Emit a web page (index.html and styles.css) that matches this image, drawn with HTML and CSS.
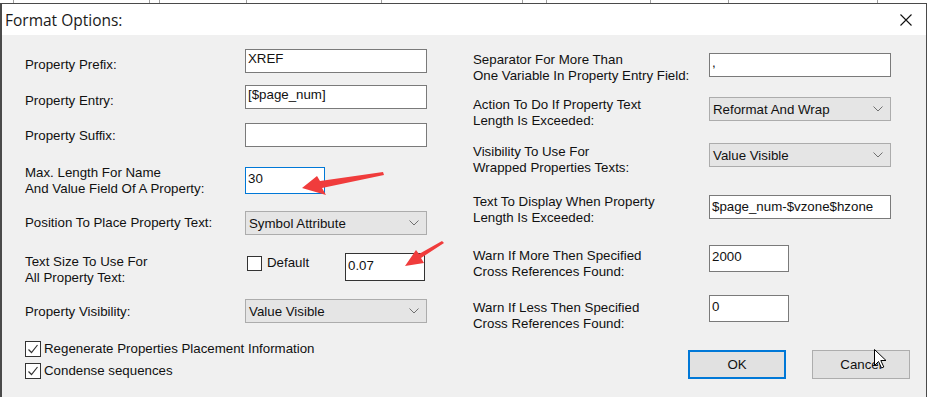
FILE: index.html
```html
<!DOCTYPE html>
<html lang="en">
<head>
  <meta charset="UTF-8">
  <meta name="viewport" content="width=device-width, initial-scale=1.0">
  <title>Format Options</title>
  <link rel="stylesheet" href="styles.css">
</head>
<body>
  <!-- table of the app behind the dialog -->
  <div class="backdrop">
    <span style="width:13px"></span>
    <span style="width:135px"></span>
    <span style="width:9px"></span>
    <span style="width:86px"></span>
    <span style="width:134px"></span>
    <span style="width:140px"></span>
    <span style="width:23px"></span>
    <span style="width:103px"></span>
    <span style="width:77px"></span>
    <span style="width:148px"></span>
  </div>

  <div class="dialog">
    <div class="titlebar">
      <span class="title">Format Options:</span>
      <svg class="close" width="12" height="12" viewBox="0 0 12 12">
        <path d="M0.5 0.5 L11.5 11.5 M11.5 0.5 L0.5 11.5" stroke="#111" stroke-width="1.1" fill="none"/>
      </svg>
    </div>

    <div class="dialog-body">
      <div class="col col-left">
        <div class="row row-prefix">
          <div class="row-label">Property Prefix:</div>
          <div class="textbox w-wide">XREF</div>
        </div>
        <div class="row row-entry">
          <div class="row-label">Property Entry:</div>
          <div class="textbox w-wide">[$page_num]</div>
        </div>
        <div class="row row-suffix">
          <div class="row-label">Property Suffix:</div>
          <div class="textbox w-wide"></div>
        </div>
        <div class="row row-maxlen">
          <div class="row-label">Max. Length For Name<br>And Value Field Of A Property:</div>
          <div class="textbox w-short tall focused">30</div>
        </div>
        <div class="row row-position">
          <div class="row-label">Position To Place Property Text:</div>
          <div class="combo"><span>Symbol Attribute</span><svg class="chevron" width="10" height="6" viewBox="0 0 10 6"><path d="M0.5 0.5 L5 5 L9.5 0.5" stroke="#707070" fill="none"/></svg></div>
        </div>
        <div class="row row-textsize">
          <div class="row-label">Text Size To Use For<br>All Property Text:</div>
          <div class="default-opt">
            <span class="checkbox small"></span>
            <span class="default-text">Default</span>
          </div>
          <div class="textbox w-short dark">0.07</div>
        </div>
        <div class="row row-visibility">
          <div class="row-label">Property Visibility:</div>
          <div class="combo"><span>Value Visible</span><svg class="chevron" width="10" height="6" viewBox="0 0 10 6"><path d="M0.5 0.5 L5 5 L9.5 0.5" stroke="#707070" fill="none"/></svg></div>
        </div>
        <div class="check-row row-regen">
          <span class="checkbox"><svg width="14" height="14" viewBox="0 0 14 14"><path d="M2.5 7.5 L5.5 10.5 L11.5 3" stroke="#333" stroke-width="1.2" fill="none"/></svg></span>
          <span>Regenerate Properties Placement Information</span>
        </div>
        <div class="check-row row-condense">
          <span class="checkbox"><svg width="14" height="14" viewBox="0 0 14 14"><path d="M2.5 7.5 L5.5 10.5 L11.5 3" stroke="#333" stroke-width="1.2" fill="none"/></svg></span>
          <span>Condense sequences</span>
        </div>
      </div>

      <div class="col col-right">
        <div class="row row-separator">
          <div class="row-label">Separator For More Than<br>One Variable In Property Entry Field:</div>
          <div class="textbox w-wide">,</div>
        </div>
        <div class="row row-action">
          <div class="row-label">Action To Do If Property Text<br>Length Is Exceeded:</div>
          <div class="combo"><span>Reformat And Wrap</span><svg class="chevron" width="10" height="6" viewBox="0 0 10 6"><path d="M0.5 0.5 L5 5 L9.5 0.5" stroke="#707070" fill="none"/></svg></div>
        </div>
        <div class="row row-wrapvis">
          <div class="row-label">Visibility To Use For<br>Wrapped Properties Texts:</div>
          <div class="combo"><span>Value Visible</span><svg class="chevron" width="10" height="6" viewBox="0 0 10 6"><path d="M0.5 0.5 L5 5 L9.5 0.5" stroke="#707070" fill="none"/></svg></div>
        </div>
        <div class="row row-display">
          <div class="row-label">Text To Display When Property<br>Length Is Exceeded:</div>
          <div class="textbox w-wide mid">$page_num-$vzone$hzone</div>
        </div>
        <div class="row row-warnmore">
          <div class="row-label">Warn If More Then Specified<br>Cross References Found:</div>
          <div class="textbox w-short tall">2000</div>
        </div>
        <div class="row row-warnless">
          <div class="row-label">Warn If Less Then Specified<br>Cross References Found:</div>
          <div class="textbox w-short tall">0</div>
        </div>
        <div class="buttons">
          <div class="btn btn-default">OK</div>
          <div class="btn">Cancel</div>
        </div>
      </div>
    </div>
  </div>

  <!-- screenshot annotations and mouse pointer -->
  <svg class="overlay" width="929" height="397" viewBox="0 0 929 397">
    <polygon points="302,188 317,176 320,181 383,172 384,175 322,188 326,195" fill="#f03c3c"/>
    <polygon points="405,266 416,250 419,254 442,241 444,243 421,258 424,263" fill="#f03c3c"/>
    <path transform="translate(874,349)" d="M0.5 0.5 V16.5 L4.5 12.5 L7.5 19 L9.8 18 L6.8 11.5 L12 11.5 Z" fill="#fff" stroke="#000" stroke-width="1"/>
  </svg>
</body>
</html>
```

FILE: styles.css
```css
body {
  margin: 0;
  width: 929px;
  height: 397px;
  overflow: hidden;
  position: relative;
  background: #fff;
  font-family: "Liberation Sans", Arial, sans-serif;
  font-size: 13.3px;
  color: #111;
}

.backdrop {
  height: 3px;
  display: flex;
  background: #fff;
}

.backdrop span {
  flex: none;
  border-right: 1px solid #a0a0a0;
}

.dialog {
  box-sizing: border-box;
  width: 927px;
  height: 400px;
  border: 1px solid #4a4a4a;
  border-left-width: 2px;
  background: #f0f0f0;
}

.titlebar {
  height: 31px;
  background: #fff;
  display: flex;
  align-items: center;
  justify-content: space-between;
  padding: 0 14px 0 3px;
}

.title {
  font-family: "Open Sans", "Noto Sans", sans-serif;
  font-size: 15.5px;
  color: #1a1a1a;
}

.dialog-body {
  display: flex;
}

.col-left {
  flex: none;
  width: 448px;
  margin-left: 23px;
  padding-top: 14px;
}

.col-right {
  flex: 1;
  padding-top: 18px;
}

/* rows keep the height of their control; two-line labels overflow it */
.row {
  display: flex;
  align-items: flex-start;
  height: 24px;
}

.row-maxlen,
.row-warnmore,
.row-warnless { height: 27px; }
.row-textsize { height: 28px; }

.row-label {
  flex: none;
  width: 220px;
  line-height: 16px;
}

.col-right .row-label {
  width: 236px;
}

/* vertical spacing, read off the dialog */
.row-entry { margin-top: 12px; }
.row-suffix { margin-top: 14px; }
.row-maxlen { margin-top: 20px; }
.row-position { margin-top: 17px; }
.row-textsize { margin-top: 18px; }
.row-visibility { margin-top: 18px; }
.row-regen { margin-top: 18px; }
.row-condense { margin-top: 6px; }

.row-action { margin-top: 20px; }
.row-wrapvis { margin-top: 22px; }
.row-display { margin-top: 28px; }
.row-warnmore { margin-top: 26px; }
.row-warnless { margin-top: 23px; }
.buttons { margin-top: 28px; }

.row-prefix .row-label,
.row-entry .row-label { margin-top: 8px; }
.row-suffix .row-label,
.row-visibility .row-label,
.row-warnless .row-label { margin-top: 5px; }
.row-maxlen .row-label { margin-top: -2px; }
.row-position .row-label { margin-top: 4px; }
.row-textsize .row-label,
.row-wrapvis .row-label { margin-top: 1px; }
.row-separator .row-label,
.row-display .row-label { margin-top: -1px; }
.row-warnmore .row-label { margin-top: 3px; }

.textbox {
  box-sizing: border-box;
  flex: none;
  height: 24px;
  background: #fff;
  border: 1px solid #7a7a7a;
  padding: 1px 2px 0;
  line-height: 16px;
  white-space: nowrap;
}

.w-wide { width: 182px; }
.w-short { width: 80px; }

.textbox.mid { padding-top: 3px; }
.textbox.tall { height: 27px; padding-top: 3px; }
.textbox.focused { border-color: #0078d7; }
.textbox.dark {
  height: 28px;
  padding-top: 4px;
  border-color: #333;
}

.combo {
  box-sizing: border-box;
  flex: none;
  width: 182px;
  height: 24px;
  background: #e5e5e5;
  border: 1px solid #acacac;
  display: flex;
  align-items: center;
  justify-content: space-between;
  padding: 0 7px 0 3px;
}

.default-opt {
  flex: none;
  width: 98px;
  display: flex;
  align-items: flex-start;
  gap: 5px;
  margin: 3px 0 0 2px;
  line-height: 16px;
}

.default-text {
  margin-top: -1px;
}

.check-row {
  display: flex;
  align-items: flex-start;
  gap: 3px;
  line-height: 16px;
  height: 16px;
}

.checkbox {
  box-sizing: border-box;
  flex: none;
  width: 16px;
  height: 16px;
  border: 1px solid #333;
  background: #fff;
}

.checkbox svg {
  display: block;
}

.checkbox.small {
  width: 15px;
  height: 15px;
}

.buttons {
  display: flex;
  gap: 26px;
  margin-left: 215px;
}

.btn {
  box-sizing: border-box;
  flex: none;
  width: 98px;
  height: 29px;
  background: #e1e1e1;
  border: 1px solid #adadad;
  display: flex;
  align-items: center;
  justify-content: center;
}

.btn-default {
  border: 2px solid #0078d7;
}

.overlay {
  position: absolute;
  top: 0;
  left: 0;
  pointer-events: none;
}
```
